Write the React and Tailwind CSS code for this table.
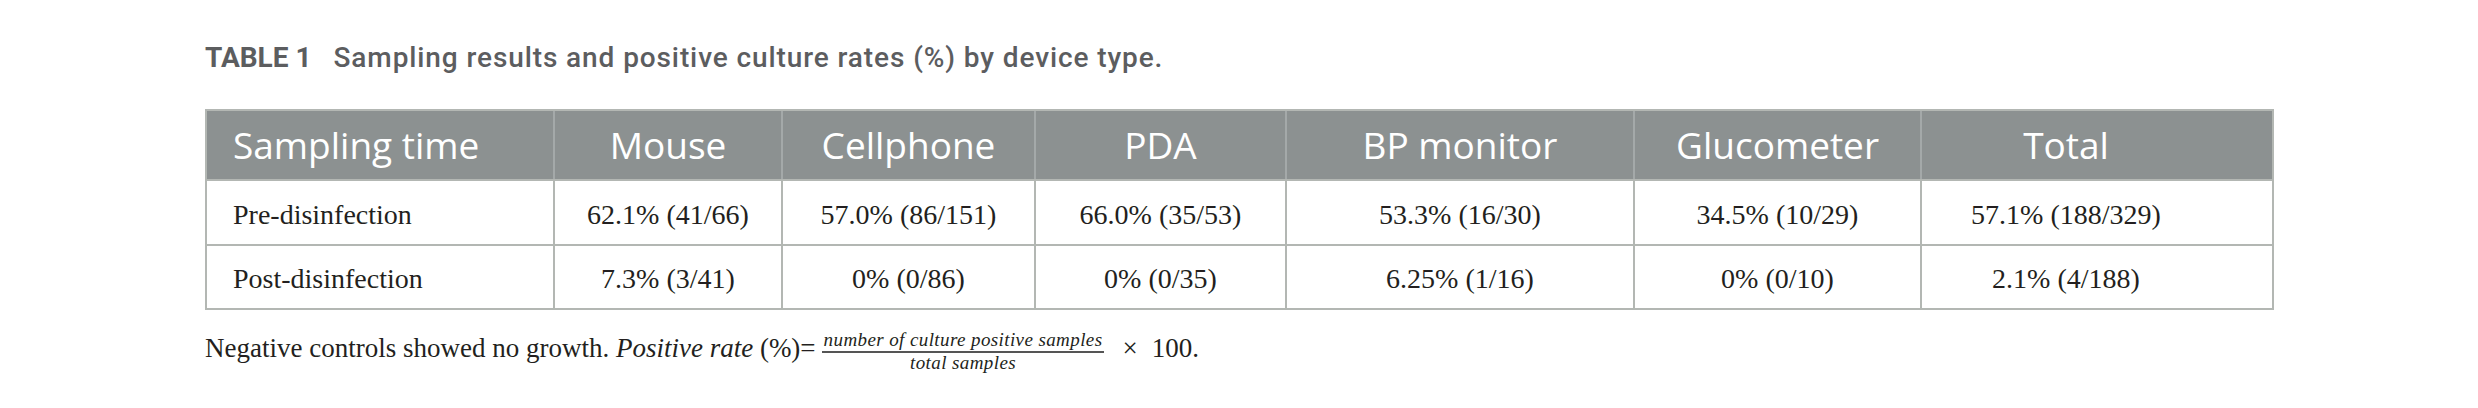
import React from "react";

const cols = [
  { w: "w-[346px]", first: true },
  { w: "w-[228px]" },
  { w: "w-[253px]" },
  { w: "w-[251px]" },
  { w: "w-[348px]" },
  { w: "w-[287px]" },
  { w: "w-[352px] pr-[62px]" },
];

const header = ["Sampling time", "Mouse", "Cellphone", "PDA", "BP monitor", "Glucometer", "Total"];
const rows = [
  ["Pre-disinfection", "62.1% (41/66)", "57.0% (86/151)", "66.0% (35/53)", "53.3% (16/30)", "34.5% (10/29)", "57.1% (188/329)"],
  ["Post-disinfection", "7.3% (3/41)", "0% (0/86)", "0% (0/35)", "6.25% (1/16)", "0% (0/10)", "2.1% (4/188)"],
];

export default function App() {
  return (
    <div className="w-[2478px] h-[408px] bg-white pl-[205px] pt-[44px]">
      <div className="flex items-baseline text-[28px] leading-none text-[#5c5d5f] font-['Roboto',sans-serif]">
        <span className="font-bold">TABLE 1</span>
        <span className="ml-[22px] font-medium tracking-[0.9px]">Sampling results and positive culture rates (%) by device type.</span>
      </div>

      <div className="mt-[37px] w-[2069px] border-2 border-[#b3b7b3]">
        <div className="flex h-[68px] bg-[#8c9191] text-white text-[37px] font-['Open_Sans',sans-serif]">
          {header.map((h, i) => (
            <div
              key={h}
              className={`${cols[i].w} flex items-center ${i === 0 ? "pl-[26px]" : "justify-center border-l-2 border-[#a4a9a9]"}`}
            >
              {h}
            </div>
          ))}
        </div>
        {rows.map((r, ri) => (
          <div
            key={ri}
            className={`flex border-t-2 border-[#b3b7b3] text-[28px] text-[#231f20] font-['Liberation_Serif',serif] ${ri === 0 ? "h-[65px]" : "h-[64px]"}`}
          >
            {r.map((c, i) => (
              <div
                key={i}
                className={`${cols[i].w} flex items-center pt-[4px] ${i === 0 ? "pl-[26px]" : "justify-center border-l-2 border-[#b3b7b3]"}`}
              >
                {c}
              </div>
            ))}
          </div>
        ))}
      </div>

      <div className="mt-[20px] text-[27px] leading-[36px] text-[#231f20] font-['Liberation_Serif',serif] whitespace-nowrap">
        Negative controls showed no growth. <i>Positive rate</i> (%)=
        <span className="inline-flex flex-col items-center align-middle mx-[6px] text-[19px] italic leading-[19px] tracking-[0.4px]">
          <span className="pb-[2px] px-[2px] border-b-2 border-[#555]">number of culture positive samples</span>
          <span>total samples</span>
        </span>
        <span className="ml-[12px]">×</span>
        <span className="ml-[14px]">100.</span>
      </div>
    </div>
  );
}
